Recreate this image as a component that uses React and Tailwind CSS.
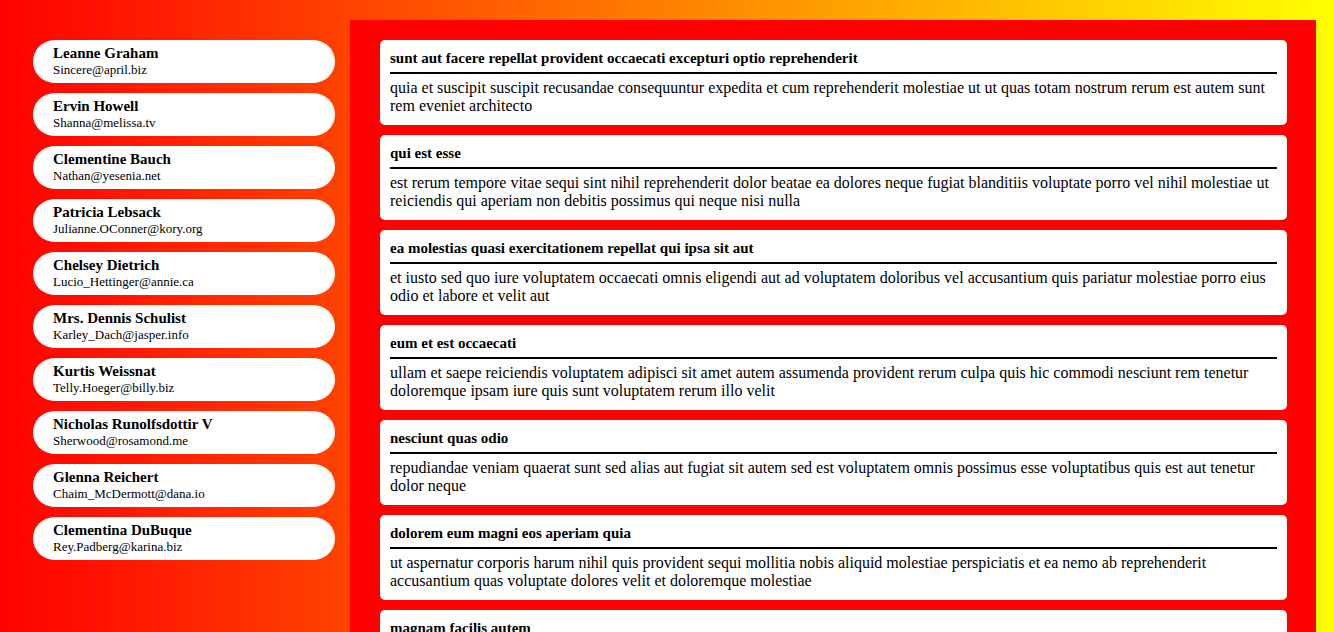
import React from "react";

const users = [
  { name: "Leanne Graham", email: "Sincere@april.biz" },
  { name: "Ervin Howell", email: "Shanna@melissa.tv" },
  { name: "Clementine Bauch", email: "Nathan@yesenia.net" },
  { name: "Patricia Lebsack", email: "Julianne.OConner@kory.org" },
  { name: "Chelsey Dietrich", email: "Lucio_Hettinger@annie.ca" },
  { name: "Mrs. Dennis Schulist", email: "Karley_Dach@jasper.info" },
  { name: "Kurtis Weissnat", email: "Telly.Hoeger@billy.biz" },
  { name: "Nicholas Runolfsdottir V", email: "Sherwood@rosamond.me" },
  { name: "Glenna Reichert", email: "Chaim_McDermott@dana.io" },
  { name: "Clementina DuBuque", email: "Rey.Padberg@karina.biz" },
];

const posts = [
  {
    title: "sunt aut facere repellat provident occaecati excepturi optio reprehenderit",
    body: "quia et suscipit suscipit recusandae consequuntur expedita et cum reprehenderit molestiae ut ut quas totam nostrum rerum est autem sunt rem eveniet architecto",
  },
  {
    title: "qui est esse",
    body: "est rerum tempore vitae sequi sint nihil reprehenderit dolor beatae ea dolores neque fugiat blanditiis voluptate porro vel nihil molestiae ut reiciendis qui aperiam non debitis possimus qui neque nisi nulla",
  },
  {
    title: "ea molestias quasi exercitationem repellat qui ipsa sit aut",
    body: "et iusto sed quo iure voluptatem occaecati omnis eligendi aut ad voluptatem doloribus vel accusantium quis pariatur molestiae porro eius odio et labore et velit aut",
  },
  {
    title: "eum et est occaecati",
    body: "ullam et saepe reiciendis voluptatem adipisci sit amet autem assumenda provident rerum culpa quis hic commodi nesciunt rem tenetur doloremque ipsam iure quis sunt voluptatem rerum illo velit",
  },
  {
    title: "nesciunt quas odio",
    body: "repudiandae veniam quaerat sunt sed alias aut fugiat sit autem sed est voluptatem omnis possimus esse voluptatibus quis est aut tenetur dolor neque",
  },
  {
    title: "dolorem eum magni eos aperiam quia",
    body: "ut aspernatur corporis harum nihil quis provident sequi mollitia nobis aliquid molestiae perspiciatis et ea nemo ab reprehenderit accusantium quas voluptate dolores velit et doloremque molestiae",
  },
  {
    title: "magnam facilis autem",
    body: "dolore placeat quibusdam ea quo vitae magni quis enim qui quis quo nemo aut saepe quidem repellat excepturi ut quia sunt ut sequi eos ea sed quas",
  },
];

const App = () => {
  return (
    <div className="h-[632px] overflow-hidden bg-[linear-gradient(to_right,#ff0000,#ffff00)] font-['Liberation_Serif',serif] text-black">
      <div className="flex items-start pt-[20px] pl-[33px]">
        <ul className="w-[302px] pt-[20px] flex flex-col gap-[10px]">
          {users.map((u) => (
            <li key={u.email} className="bg-white rounded-full pl-[20px] py-[5px] h-[43px]">
              <div className="text-[15px] leading-[17px] font-bold">{u.name}</div>
              <div className="text-[13px] leading-[16px]">{u.email}</div>
            </li>
          ))}
        </ul>

        <div className="ml-[15px] w-[966px] bg-[#ff0000] pl-[30px] pr-[29px] py-[20px] flex flex-col gap-[10px]">
          {posts.map((p) => (
            <div key={p.title} className="bg-white rounded-[5px] p-[10px]">
              <h3 className="text-[15px] leading-[17px] font-bold pb-[5px] border-b-2 border-black">
                {p.title}
              </h3>
              <p className="mt-[5px] text-[16px] leading-[18px]">{p.body}</p>
            </div>
          ))}
        </div>
      </div>
    </div>
  );
};

export default App;
